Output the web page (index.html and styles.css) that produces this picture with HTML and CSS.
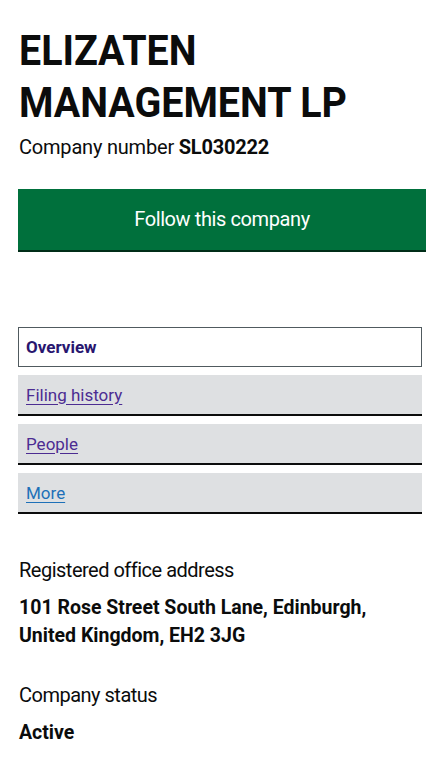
FILE: index.html
```html
<!DOCTYPE html>
<html lang="en">
<head>
  <meta charset="UTF-8">
  <meta name="viewport" content="width=device-width, initial-scale=1.0">
  <title>ELIZATEN MANAGEMENT LP</title>
  <link rel="stylesheet" href="styles.css">
</head>
<body>
  <main class="page">
    <!-- Cabeçalho da empresa -->
    <header class="company-header">
      <h1 class="company-name">ELIZATEN MANAGEMENT LP</h1>
      <p class="company-number">Company number <strong>SL030222</strong></p>
      <a class="follow-button" href="#">Follow this company</a>
    </header>

    <!-- Abas -->
    <nav class="tabs">
      <ul class="tab-list">
        <li class="tab tab-active"><span>Overview</span></li>
        <li class="tab"><a class="visited" href="#">Filing history</a></li>
        <li class="tab"><a class="visited" href="#">People</a></li>
        <li class="tab"><a class="link" href="#">More</a></li>
      </ul>
    </nav>

    <!-- Detalhes -->
    <dl class="details">
      <dt>Registered office address</dt>
      <dd>101 Rose Street South Lane, Edinburgh, United Kingdom, EH2 3JG</dd>
      <dt>Company status</dt>
      <dd>Active</dd>
    </dl>
  </main>
</body>
</html>
```

FILE: styles.css
```css
body {
  font-family: 'Roboto', 'Liberation Sans', sans-serif;
  background-color: #fff;
  color: #0b0c0c;
  margin: 0;
  padding: 0;
}

.page {
  padding: 24px 11px 0 18px;
}

.company-name {
  font-size: 43px;
  font-weight: bold;
  line-height: 52px;
  margin: 0 0 7px 1px;
  transform: scaleX(0.915);
  transform-origin: left top;
}

.company-number {
  font-size: 20px;
  margin: 0 0 30px 1px;
  letter-spacing: -0.2px;
}

.company-number strong {
  font-weight: bold;
}

.follow-button {
  display: block;
  background: #00703c;
  color: #fff;
  text-align: center;
  text-decoration: none;
  font-size: 20px;
  line-height: 61px;
  height: 61px;
  border-bottom: 2px solid #002d18;
  letter-spacing: -0.4px;
}

.tabs {
  margin-top: 75px;
}

.tab-list {
  list-style: none;
  margin: 0;
  padding: 0 4px 0 0;
}

.tab {
  background: #dee0e2;
  height: 39px;
  margin-bottom: 8px;
  padding: 0 8px;
  border-bottom: 2px solid #0b0c0c;
  display: flex;
  align-items: center;
  font-size: 17px;
}

.tab-active {
  background: #fff;
  border: 1px solid #505a5f;
  height: 38px;
  padding-left: 7px;
  font-weight: bold;
  color: #28166f;
}

.tab a {
  text-underline-offset: 3px;
}

.visited {
  color: #4c2c92;
}

.link {
  color: #1d70b8;
}

.details {
  margin: 44px 0 0 1px;
  font-size: 20px;
}

.details dt {
  line-height: 25px;
  margin: 0 0 11px;
  letter-spacing: -0.5px;
}

.details dd {
  margin: 0 0 33px;
  font-weight: bold;
  font-size: 19.5px;
  line-height: 28px;
  letter-spacing: 0;
}
```
